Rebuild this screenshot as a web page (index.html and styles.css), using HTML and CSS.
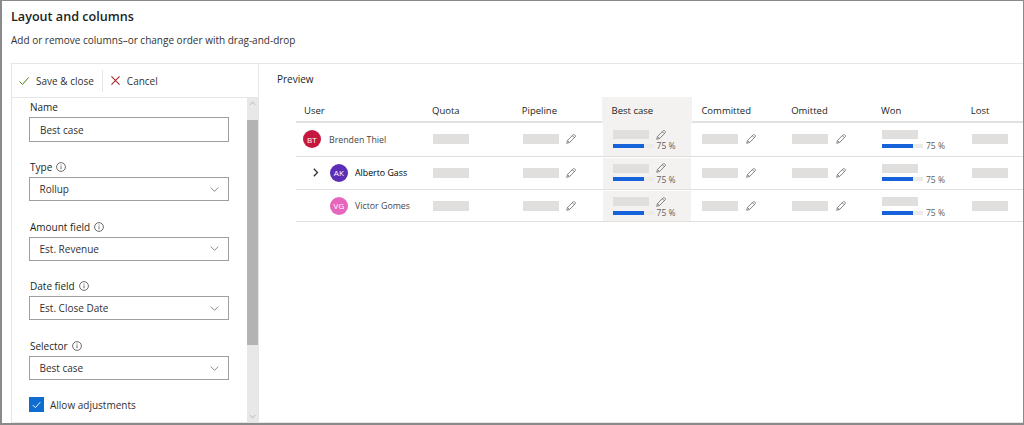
FILE: index.html
```html
<!DOCTYPE html>
<html lang="en">
<head>
  <meta charset="UTF-8">
  <title>Layout and columns</title>
  <link rel="stylesheet" href="styles.css">
</head>
<body>
  <svg class="defs" width="0" height="0">
    <symbol id="i-info" viewBox="0 0 10 10"><circle cx="5" cy="5" r="4.4" fill="none" stroke="currentColor" stroke-width=".8"/><path d="M5 4.300v3M5 2.500v1" fill="none" stroke="currentColor" stroke-width=".8"/></symbol>
    <symbol id="i-down" viewBox="0 0 10 6"><path d="M.5.7L5 5.200 9.500.7" fill="none" stroke="currentColor" stroke-width=".9"/></symbol>
    <symbol id="i-pen" viewBox="0 0 10 10"><path d="M.7 9.300l.8-2.900L7.200.8c.4-.4 1-.4 1.400 0l.6.6c.4.4.4 1 0 1.400L3.600 8.500zM6.300 1.700l2 2M1.500 6.400l2.100 2.100" fill="none" stroke="currentColor" stroke-width=".9"/></symbol>
  </svg>

  <div class="window">
    <h1>Layout and columns</h1>
    <p class="subtitle">Add or remove columns–or change order with drag-and-drop</p>

    <div class="panels">
      <div class="editor">
        <div class="toolbar">
          <button class="tool tool-save">
            <svg class="tool-icon" viewBox="0 0 10 10"><path d="M.5 5.500l3 3 6-7" fill="none" stroke="currentColor" stroke-width="1"/></svg>
            <span>Save &amp; close</span>
          </button>
          <span class="tool-sep"></span>
          <button class="tool tool-cancel">
            <svg class="tool-icon" viewBox="0 0 10 10"><path d="M.5.5l9 9M9.500.5l-9 9" fill="none" stroke="currentColor" stroke-width="1.200"/></svg>
            <span>Cancel</span>
          </button>
        </div>
        <div class="editor-body">
          <form class="form">
            <div class="field field-name">
              <label class="label">Name</label>
              <div class="input input-name">Best case</div>
            </div>
            <div class="field">
              <label class="label">Type <svg class="info"><use href="#i-info"/></svg></label>
              <div class="input">Rollup <svg class="caret"><use href="#i-down"/></svg></div>
            </div>
            <div class="field">
              <label class="label">Amount field <svg class="info"><use href="#i-info"/></svg></label>
              <div class="input">Est. Revenue <svg class="caret"><use href="#i-down"/></svg></div>
            </div>
            <div class="field">
              <label class="label">Date field <svg class="info"><use href="#i-info"/></svg></label>
              <div class="input">Est. Close Date <svg class="caret"><use href="#i-down"/></svg></div>
            </div>
            <div class="field">
              <label class="label">Selector <svg class="info"><use href="#i-info"/></svg></label>
              <div class="input">Best case <svg class="caret"><use href="#i-down"/></svg></div>
            </div>
            <div class="check-row">
              <span class="checkbox"><svg viewBox="0 0 16 16"><path d="M4 8.500l2.800 2.800L12 5.500" fill="none" stroke="#fff" stroke-width="1"/></svg></span>
              <span class="check-text">Allow adjustments</span>
            </div>
          </form>
          <div class="scrollbar">
            <svg class="scroll-arrow" viewBox="0 0 10 6"><path d="M1 5l4-4 4 4" fill="none" stroke="currentColor"/></svg>
            <div class="scroll-thumb"></div>
            <svg class="scroll-arrow scroll-arrow-down" viewBox="0 0 10 6"><path d="M1 1l4 4 4-4" fill="none" stroke="currentColor"/></svg>
          </div>
        </div>
      </div>

      <div class="preview">
        <div class="preview-title">Preview</div>
        <div class="grid">
          <div class="row row-head">
            <div class="th th-user">User</div>
            <div class="th">Quota</div>
            <div class="th">Pipeline</div>
            <div class="th th-active">Best case</div>
            <div class="th">Committed</div>
            <div class="th">Omitted</div>
            <div class="th">Won</div>
            <div class="th">Lost</div>
          </div>

          <div class="row">
            <div class="user"><span class="avatar avatar-bt">BT</span><span class="name">Brenden Thiel</span></div>
            <div class="cell"><span class="ph"></span></div>
            <div class="cell"><span class="ph"></span><svg class="pen"><use href="#i-pen"/></svg></div>
            <div class="cell cell-active cell-stack">
              <div class="stack-top"><span class="ph"></span><svg class="pen"><use href="#i-pen"/></svg></div>
              <div class="stack-bottom"><span class="bar"><span class="bar-fill"></span></span><span class="pct">75 %</span></div>
            </div>
            <div class="cell"><span class="ph"></span><svg class="pen"><use href="#i-pen"/></svg></div>
            <div class="cell"><span class="ph"></span><svg class="pen"><use href="#i-pen"/></svg></div>
            <div class="cell cell-stack">
              <div class="stack-top"><span class="ph"></span></div>
              <div class="stack-bottom"><span class="bar"><span class="bar-fill"></span></span><span class="pct">75 %</span></div>
            </div>
            <div class="cell"><span class="ph"></span></div>
          </div>

          <div class="row">
            <div class="user user-child">
              <svg class="expand" viewBox="0 0 6 9"><path d="M.8.8l3.700 3.700L.8 8.200" fill="none" stroke="currentColor" stroke-width="1.300"/></svg>
              <span class="avatar avatar-ak">AK</span><span class="name name-strong">Alberto Gass</span>
            </div>
            <div class="cell"><span class="ph"></span></div>
            <div class="cell"><span class="ph"></span><svg class="pen"><use href="#i-pen"/></svg></div>
            <div class="cell cell-active cell-stack">
              <div class="stack-top"><span class="ph"></span><svg class="pen"><use href="#i-pen"/></svg></div>
              <div class="stack-bottom"><span class="bar"><span class="bar-fill"></span></span><span class="pct">75 %</span></div>
            </div>
            <div class="cell"><span class="ph"></span><svg class="pen"><use href="#i-pen"/></svg></div>
            <div class="cell"><span class="ph"></span><svg class="pen"><use href="#i-pen"/></svg></div>
            <div class="cell cell-stack">
              <div class="stack-top"><span class="ph"></span></div>
              <div class="stack-bottom"><span class="bar"><span class="bar-fill"></span></span><span class="pct">75 %</span></div>
            </div>
            <div class="cell"><span class="ph"></span></div>
          </div>

          <div class="row row-last">
            <div class="user user-child user-leaf">
              <span class="avatar avatar-vg">VG</span><span class="name">Victor Gomes</span>
            </div>
            <div class="cell"><span class="ph"></span></div>
            <div class="cell"><span class="ph"></span><svg class="pen"><use href="#i-pen"/></svg></div>
            <div class="cell cell-active cell-stack">
              <div class="stack-top"><span class="ph"></span><svg class="pen"><use href="#i-pen"/></svg></div>
              <div class="stack-bottom"><span class="bar"><span class="bar-fill"></span></span><span class="pct">75 %</span></div>
            </div>
            <div class="cell"><span class="ph"></span><svg class="pen"><use href="#i-pen"/></svg></div>
            <div class="cell"><span class="ph"></span><svg class="pen"><use href="#i-pen"/></svg></div>
            <div class="cell cell-stack">
              <div class="stack-top"><span class="ph"></span></div>
              <div class="stack-bottom"><span class="bar"><span class="bar-fill"></span></span><span class="pct">75 %</span></div>
            </div>
            <div class="cell"><span class="ph"></span></div>
          </div>
        </div>
      </div>
    </div>
  </div>
</body>
</html>
```

FILE: styles.css
```css
* { box-sizing: border-box; }
html, body { margin: 0; height: 100%; }
body { font-family: "Open Sans", "Noto Sans", sans-serif; font-size: 10px; color: #323130; background: #fff; overflow: hidden; }
.defs { position: absolute; }

.window { height: 425px; border: 1px solid #8a8a8a; border-width: 1px 1px 2px 2px; padding-left: 9px; display: flex; flex-direction: column; overflow: hidden; }
h1 { margin: 7px 0 0; font-size: 12.600px; line-height: 18px; font-weight: 600; color: #201f1e; }
.subtitle { margin: 6px 0 0; font-size: 10px; line-height: 16px; height: 31px; }

.panels { flex: 1; min-height: 0; display: flex; border-top: 1px solid #e6e6e6; border-bottom: 1px solid #e6e6e6; }

/* left side */
.editor { width: 248px; flex: none; display: flex; flex-direction: column; border-left: 1px solid #e6e6e6; border-right: 1px solid #e6e6e6; }
.toolbar { height: 34px; flex: none; display: flex; align-items: center; border-bottom: 1px solid #e6e6e6; }
.tool { display: flex; align-items: center; gap: 7px; border: 0; background: none; padding: 0; font: inherit; color: #323130; }
.tool-icon { width: 10px; height: 10px; }
.tool-save { margin-left: 7px; }
.tool-save .tool-icon { color: #498205; }
.tool-sep { width: 1px; height: 22px; background: #e6e6e6; margin: 0 8px 0 8px; }
.tool-cancel .tool-icon { width: 9px; height: 9px; color: #a4262c; }

.editor-body { flex: 1; min-height: 0; display: flex; }
.form { flex: 1; min-width: 0; padding: 1px 18px 0 17px; overflow: hidden; }
.field { margin-bottom: 17.700px; }
.field-name { margin-bottom: 17px; }
.label { display: flex; align-items: center; gap: 4px; height: 16px; margin-bottom: 2px; padding-left: 1px; font-weight: 500; color: #201f1e; }
.info { width: 10px; height: 10px; color: #484644; }
.input { position: relative; height: 24px; display: flex; align-items: center; padding-left: 9.500px; border: 1px solid #a19f9d; border-bottom-width: 1.500px; color: #323130; }
.input-name { height: 25px; padding-left: 10px; }
.caret { position: absolute; right: 9px; top: 8.500px; width: 9px; height: 5px; color: #605e5c; }

.check-row { display: flex; align-items: center; gap: 6px; margin-top: -1px; }
.check-text { padding-top: 1px; }
.checkbox { width: 15px; height: 15px; background: #0f6cd0; display: block; }
.checkbox svg { display: block; width: 15px; height: 15px; }

.scrollbar { width: 11px; flex: none; background: #e8e8e8; display: flex; flex-direction: column; }
.scroll-arrow { width: 7px; height: 5px; margin: 3px 2px 14px; color: #a6a6a6; flex: none; }
.scroll-thumb { height: 225px; background: #b3b3b3; flex: none; }
.scroll-arrow-down { margin: auto 2px 3px; }

/* right side */
.preview { flex: 1; min-width: 0; overflow: hidden; }
.preview-title { font-weight: 500; font-size: 10px; color: #201f1e; padding: 8px 0 0 18px; height: 33px; line-height: 14px; }
.grid { margin-left: 37px; width: 756px; }
.row { display: grid; grid-template-columns: 127px repeat(7, 89.800px); border-bottom: 1px solid #e1dfdd; height: 33.500px; }
.row-head { height: 26px; border-bottom: 2px solid #e1e1e1; }
.row-last { height: 32px; }
.th { padding-left: 9px; font-weight: 500; font-size: 9.500px; line-height: 27px; color: #201f1e; }
.th-user { padding-left: 8px; }
.th-active { background: #f3f2f1; margin: 0 0 1px -.8px; padding-left: 9.800px; }

.user { display: flex; align-items: center; padding-left: 7px; }
.user-child { padding-left: 17px; }
.user-leaf { padding-left: 34px; }
.avatar { width: 18px; height: 18px; border-radius: 50%; color: #fff; font-size: 8px; letter-spacing: .3px; flex: none; display: flex; align-items: center; justify-content: center; }
.avatar-bt { background: #c4183f; }
.avatar-ak { background: #5c2db5; }
.avatar-vg { background: #e666bd; }
.name { margin-left: 8px; padding-top: 1px; font-size: 8.800px; color: #484644; white-space: nowrap; }
.user-child .name { margin-left: 7px; padding-top: 0; }
.name-strong { color: #000; font-weight: 500; }
.expand { width: 6px; height: 9px; margin-right: 11px; color: #323130; }

.cell { display: flex; align-items: center; padding-left: 10px; gap: 7.500px; }
.cell-active { background: #f3f2f1; margin: 1px 1px 0 0; }
.cell-stack { display: block; padding-top: 6.500px; }
.cell-active.cell-stack { padding-top: 5.500px; }
.stack-top { display: flex; align-items: center; height: 10px; gap: 7.500px; }
.stack-top .ph { height: 9px; }
.stack-bottom { display: flex; align-items: center; gap: 3px; margin-top: 1px; height: 10px; }
.ph { width: 36px; height: 10px; background: #e1dfdd; display: block; flex: none; }
.pen { width: 10px; height: 10px; color: #7a7876; flex: none; }
.bar { width: 41px; height: 4px; background: #edebe9; display: block; flex: none; }
.bar-fill { width: 31px; height: 4px; background: #1662d8; display: block; }
.pct { font-size: 8.500px; color: #605e5c; white-space: nowrap; }
```
